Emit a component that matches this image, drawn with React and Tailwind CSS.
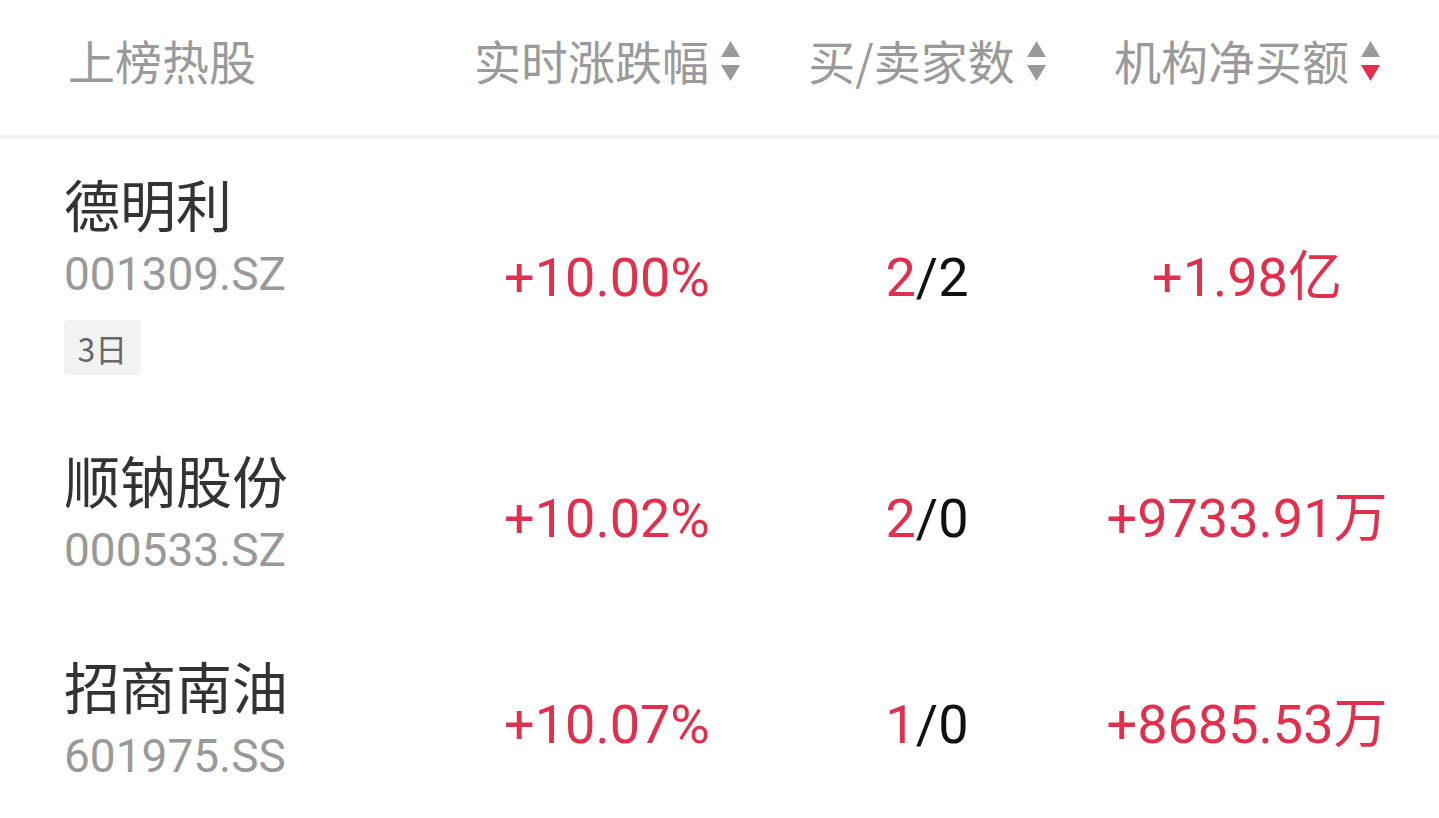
const rows = [
  { name: '德明利', code: '001309.SZ', tag: '3日', change: '+10.00%', buy: '2', sell: '2', amount: '+1.98亿' },
  { name: '顺钠股份', code: '000533.SZ', change: '+10.02%', buy: '2', sell: '0', amount: '+9733.91万' },
  { name: '招商南油', code: '601975.SS', change: '+10.07%', buy: '1', sell: '0', amount: '+8685.53万' },
]

const cjk = "font-['Noto_Sans_CJK_SC','Noto_Sans',sans-serif]"
const num = "font-['Roboto','Noto_Sans_CJK_SC',sans-serif]"

function SortArrows({ active }) {
  return (
    <svg width="19" height="40" viewBox="0 0 19 40" className="ml-3 shrink-0">
      <polygon points="9.5,0 19,16 0,16" fill="#9a9a9a" />
      <polygon points="0,24 19,24 9.5,40" fill={active ? '#e0304e' : '#9a9a9a'} />
    </svg>
  )
}

function HeadCell({ label, active }) {
  return (
    <div className="flex items-center justify-center">
      <span>{label}</span>
      <SortArrows active={active} />
    </div>
  )
}

export default function App() {
  return (
    <div className={`w-[1439px] h-[818px] bg-white overflow-hidden ${cjk}`}>
      {/* 表头 */}
      <div className="grid grid-cols-[447px_320px_320px_320px] h-[139px] pb-[14px] items-center border-b-4 border-[#f2f2f2] text-[47px] text-[#9a9a9a]">
        <div className="pl-[68px]">上榜热股</div>
        <HeadCell label="实时涨跌幅" />
        <HeadCell label="买/卖家数" />
        <HeadCell label="机构净买额" active />
      </div>

      {rows.map((r) => (
        <div key={r.code} className="grid grid-cols-[447px_320px_320px_320px] items-center">
          <div className={`pl-[64px] pt-[32px] ${r.tag ? 'pb-[40px]' : 'pb-[44px]'}`}>
            <div className="text-[56px] leading-[64px] text-[#333]">{r.name}</div>
            <div className={`${num} mt-[12px] text-[46px] leading-[54px] text-[#999]`}>{r.code}</div>
            {r.tag && (
              <div className="mt-[19px] inline-flex items-center justify-center w-[77px] h-[55px] rounded bg-[#f2f2f2] text-[32px] text-[#666]">
                {r.tag}
              </div>
            )}
          </div>
          <div className={`${num} text-center text-[54px] text-[#e0304e]`}>{r.change}</div>
          <div className={`${num} text-center text-[54px]`}>
            <span className="text-[#e0304e]">{r.buy}</span>
            <span className="text-[#111]">/{r.sell}</span>
          </div>
          <div className={`${num} text-center text-[54px] text-[#e0304e]`}>{r.amount}</div>
        </div>
      ))}
    </div>
  )
}
